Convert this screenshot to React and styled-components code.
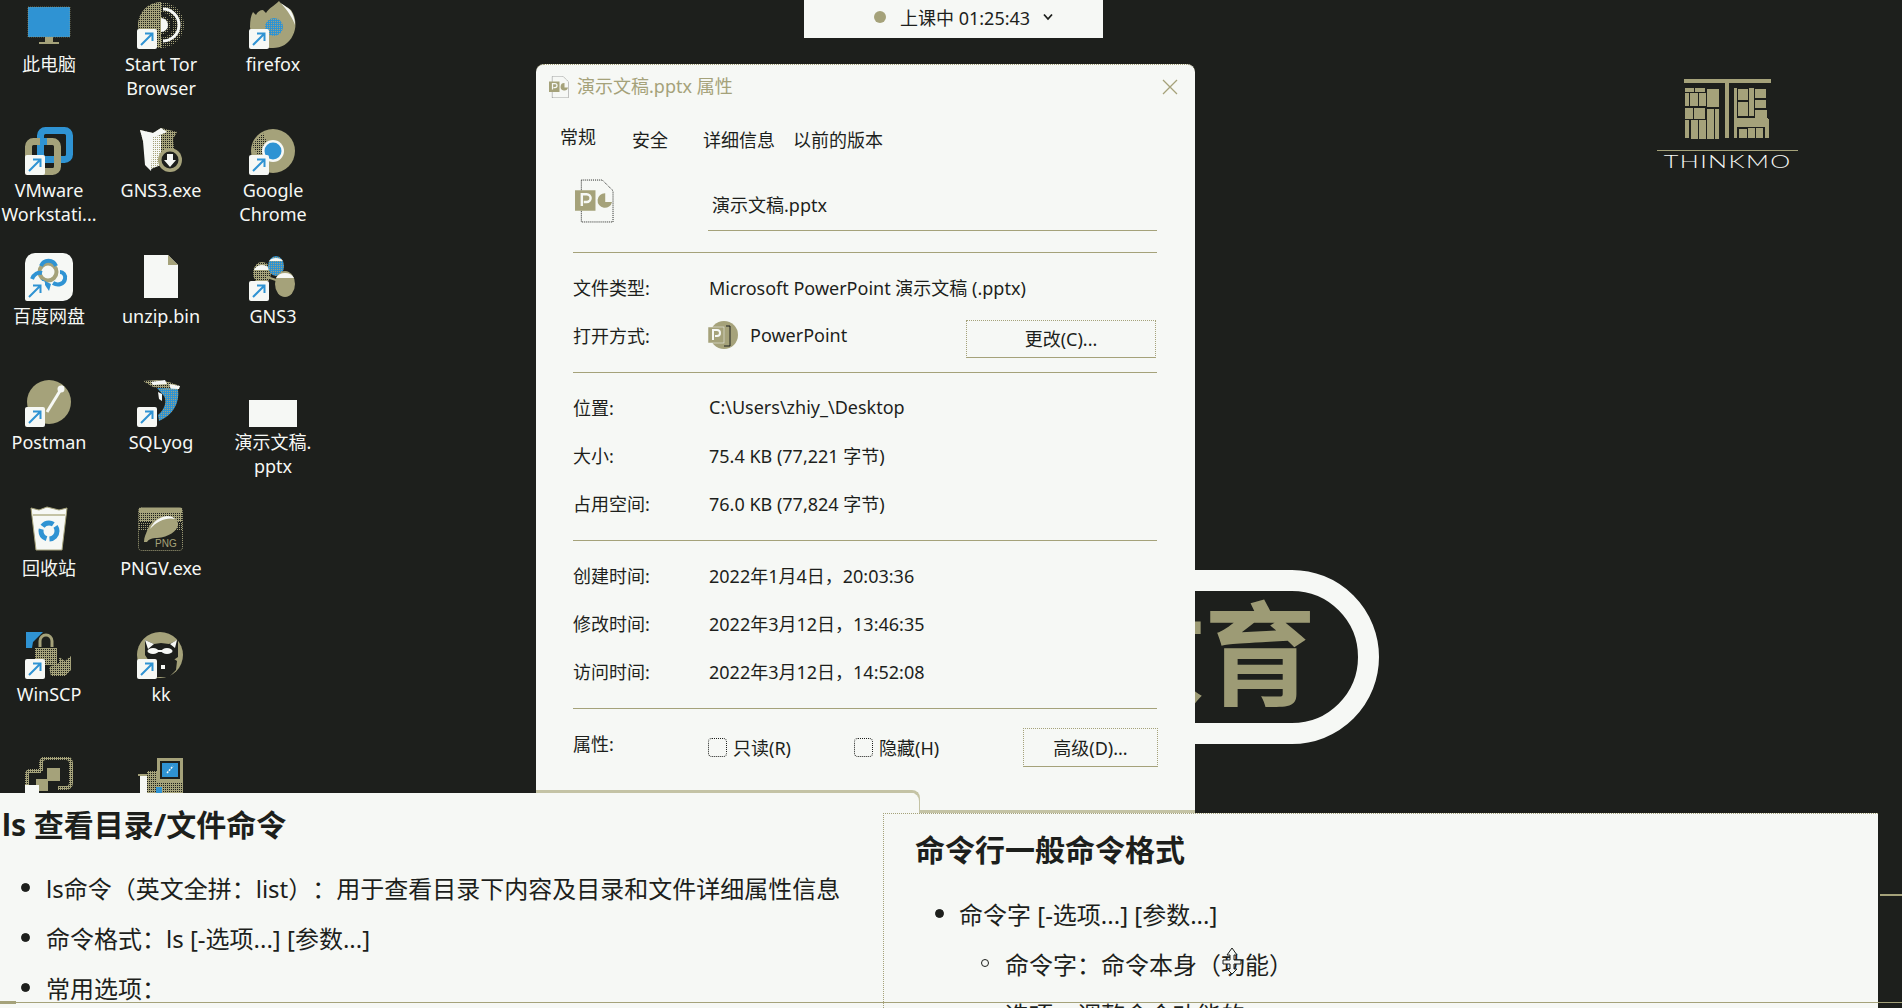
import React from 'react'
import styled, { createGlobalStyle } from 'styled-components'

const DARK = '#1d1f1c'
const PAPER = '#f6f8f5'
const OLIVE = '#a5a27a'
const HAZE = '#c4c3a5'
const BLUE = '#2f93d3'
const FONT = '"Noto Sans", "Noto Sans CJK SC", sans-serif'

const Global = createGlobalStyle`
  html, body { margin: 0; padding: 0; background: ${DARK}; }
  * { box-sizing: border-box; }
  body { text-spacing-trim: space-all; }
`

const Screen = styled.div`
  position: relative;
  width: 1902px;
  height: 1008px;
  overflow: hidden;
  background: ${DARK};
  font-family: ${FONT};
`

/* desktop icons */
const Desktop = styled.div`
  display: grid;
  grid-template-rows: repeat(7, 126px);
  grid-auto-columns: 98px;
  grid-auto-flow: column;
  column-gap: 14px;
`
const Cell = styled.div`
  display: flex;
  flex-direction: column;
  align-items: center;
  padding-top: 1px;
`
const IconBox = styled.div`
  position: relative;
  width: 48px;
  height: 48px;
  svg { display: block; }
`
const CellLabel = styled.div`
  margin-top: 3px;
  width: 100%;
  text-align: center;
  font-size: 18px;
  line-height: 24px;
  color: ${PAPER};
  white-space: pre-line;
`
const Badge = styled.div`
  position: absolute;
  left: 0;
  bottom: 0;
  width: 20px;
  height: 20px;
  border-radius: 2px;
  background: ${PAPER};
`

const Shortcut = () => (
  <Badge>
    <svg width="20" height="20" viewBox="0 0 20 20" fill="none" stroke={BLUE} strokeWidth="2">
      <path d="M4 16 15 5M8 4.500h7.500V12" />
    </svg>
  </Badge>
)

const Pic = ({ children }) => <svg width="48" height="48" viewBox="0 0 48 48">{children}</svg>

const HiddenSvg = styled.svg`
  position: absolute;
`
const Dither = () => (
  <HiddenSvg width="0" height="0">
    <defs>
      <pattern id="dither" width="2" height="2" patternUnits="userSpaceOnUse">
        <rect width="2" height="2" fill={OLIVE} />
        <rect width="1" height="1" fill={DARK} />
      </pattern>
      <pattern id="ditherdark" width="2" height="2" patternUnits="userSpaceOnUse">
        <rect width="2" height="2" fill={DARK} />
        <rect width="1" height="1" fill={OLIVE} />
      </pattern>
      <pattern id="ditherwhite" width="2" height="2" patternUnits="userSpaceOnUse">
        <rect width="2" height="2" fill={PAPER} />
        <rect width="1" height="1" fill={OLIVE} />
      </pattern>
      <pattern id="ditherblue" width="2" height="2" patternUnits="userSpaceOnUse">
        <rect width="2" height="2" fill={BLUE} />
        <rect width="1" height="1" fill={OLIVE} />
      </pattern>
    </defs>
  </HiddenSvg>
)

const icons = {
  pc: (
    <Pic>
      <rect x="3" y="6" width="42" height="30" fill={BLUE} stroke={OLIVE} strokeWidth="0.6" strokeDasharray="1 1" />
      <path d="M20 36h8v5h-8z" fill={OLIVE} />
      <path d="M14 41h20v2H14z" fill={OLIVE} />
    </Pic>
  ),
  tor: (
    <Pic>
      <path d="M24 1a23 23 0 0 0 0 46z" fill="url(#dither)" />
      <path d="M24 1a23 23 0 0 1 0 46z" fill="url(#ditherdark)" />
      <path d="M26 8a16 16 0 0 1 0 32" fill="none" stroke={PAPER} strokeWidth="3" />
      <path d="M24 13a11 11 0 0 1 0 22" fill="none" stroke={DARK} strokeWidth="3" />
      <path d="M24 17a7 7 0 0 1 0 14z" fill={PAPER} />
    </Pic>
  ),
  firefox: (
    <Pic>
      <path d="M30 0c2 4 8 5 12 9 5 7 6 17 2 25-4 9-12 13-20 13C12 47 2 38 1 26c0-7 1-12 3-15l3 3c1-3 4-5 7-5l3 3c3-5 8-7 13-12z" fill={OLIVE} />
      <path d="M30 0c3 4 9 6 12 10 3 5 4 10 4 14-2-6-6-13-16-24z" fill={PAPER} />
      <circle cx="25" cy="26" r="9" fill="url(#ditherblue)" />
    </Pic>
  ),
  vmware: (
    <Pic>
      <rect x="15.500" y="3.500" width="29" height="29" rx="5" fill="none" stroke={BLUE} strokeWidth="7" />
      <rect x="3.500" y="14.500" width="29" height="30" rx="5" fill="none" stroke={OLIVE} strokeWidth="7" />
      <path d="M15 11h7v7h-7z" fill={BLUE} />
    </Pic>
  ),
  gns3exe: (
    <Pic>
      <path d="M3 3 16 6 24 1 40 5 36 12 38 30 12 37 6 14z" fill="url(#dither)" />
      <path d="M3 3 16 6 24 1 30 5 18 10 14 44 8 38 6 14z" fill={PAPER} />
      <path d="M16 10 24 8 24 38 14 42z" fill="url(#ditherwhite)" />
      <circle cx="33" cy="33" r="12" fill={OLIVE} />
      <circle cx="33" cy="33" r="8.500" fill={DARK} />
      <path d="M30 27h6v6h3l-6 7-6-7h3z" fill={PAPER} />
    </Pic>
  ),
  chrome: (
    <Pic>
      <circle cx="24" cy="24" r="22" fill={OLIVE} />
      <path d="M3 18 14 6l6 14-10 10z" fill="url(#dither)" />
      <circle cx="24" cy="24" r="11" fill={PAPER} />
      <circle cx="24" cy="24" r="8.500" fill={BLUE} />
    </Pic>
  ),
  baidu: (
    <Pic>
      <rect width="48" height="48" rx="10" fill={PAPER} />
      <circle cx="23" cy="19" r="8.500" fill="none" stroke={OLIVE} strokeWidth="4" />
      <path d="M16 13a8 8 0 0 1 15 0" fill="none" stroke={BLUE} strokeWidth="4" />
      <path d="M7 26c2-5 6-7 10-6M28 30c5 3 11 1 12-4 1-4-2-7-5-7" fill="none" stroke={BLUE} strokeWidth="4" />
      <path d="M16 26 26 31 24 38z" fill={BLUE} />
    </Pic>
  ),
  file: (
    <Pic>
      <path d="M7 2h24l10 10v33H7z" fill={PAPER} />
      <path d="M31 2v10h10z" fill={OLIVE} />
    </Pic>
  ),
  gns3: (
    <Pic>
      <ellipse cx="13" cy="20" rx="9" ry="11" fill="url(#dither)" />
      <path d="M5 17a9 9 0 0 1 16 0z" fill={PAPER} />
      <ellipse cx="27" cy="13" rx="8" ry="10" fill="url(#ditherblue)" />
      <path d="M20 8a8 6 0 0 1 14 0z" fill={PAPER} />
      <path d="M18 24 30 28" stroke={OLIVE} strokeWidth="2" />
      <ellipse cx="36" cy="31" rx="10" ry="13" fill={OLIVE} />
      <path d="M27 25a10 9 0 0 1 18 0z" fill={PAPER} />
    </Pic>
  ),
  postman: (
    <Pic>
      <circle cx="24" cy="23" r="22" fill={OLIVE} />
      <path d="M38 7 22 33" stroke={PAPER} strokeWidth="3" />
      <circle cx="36" cy="10" r="3.500" fill={PAPER} />
    </Pic>
  ),
  sqlyog: (
    <Pic>
      <path d="M6 2 20 1 32 3 43 7 42 9 30 10 16 8z" fill="url(#dither)" />
      <path d="M14 3 28 1 30 5 16 6zM32 5 43 7 42 10 34 10z" fill={PAPER} />
      <path d="M20 9 41 10C43 24 36 36 22 42L21 36C28 30 30 22 27 17z" fill="url(#ditherblue)" />
      <path d="M21 13 25 15 25 22 22 20z" fill={PAPER} />
    </Pic>
  ),
  pptxBlank: (
    <Pic>
      <rect y="21" width="48" height="27" fill={PAPER} />
    </Pic>
  ),
  recycle: (
    <Pic>
      <path d="M6 3 14 5 22 2 34 5 42 3 37 45H11z" fill={PAPER} stroke={OLIVE} strokeWidth="1" />
      <path d="M8 10h32" stroke={HAZE} strokeWidth="2" />
      <circle cx="24" cy="26" r="8" fill="none" stroke={BLUE} strokeWidth="5" strokeDasharray="12 3" />
    </Pic>
  ),
  pngv: (
    <Pic>
      <rect x="1.500" y="2.500" width="44" height="43" rx="3" fill={DARK} stroke={OLIVE} strokeDasharray="1 1" />
      <rect x="2" y="3" width="43" height="5" fill={OLIVE} />
      <rect x="2" y="8" width="43" height="9" fill="url(#dither)" />
      <rect x="2" y="17" width="43" height="9" fill="url(#ditherdark)" />
      <path d="M7 37c0-5 2-8 3-11 3-9 11-15 20-15 6 0 12 4 11 9-1 6-9 12-21 13-5 0-8 1-10 4z" fill={OLIVE} />
      <path d="M13 24c3-7 9-12 17-13 4 0 6 1 8 3-8-2-18 2-25 10z" fill={PAPER} />
      <text x="18" y="42" fontSize="10" fontFamily="Liberation Sans" fill={OLIVE}>PNG</text>
    </Pic>
  ),
  winscp: (
    <Pic>
      <path d="M1 1h17L8 11l-1 6H1z" fill={BLUE} />
      <path d="M15 16V10a6 6 0 0 1 12 0v6" fill="none" stroke={OLIVE} strokeWidth="3" />
      <rect x="10" y="17" width="22" height="17" fill="url(#dither)" />
      <path d="M24 36 34 32V26l6 4 6-5v14l-6 6H26z" fill="url(#dither)" />
    </Pic>
  ),
  kk: (
    <Pic>
      <circle cx="23" cy="24" r="23" fill={OLIVE} />
      <path d="M8 9 17 13 24 12 32 13 41 9 41 26 35 30 12 30 8 24z" fill={DARK} />
      <path d="M8 9 17 13 11 18zM40 9 33 13 38 17z" fill={PAPER} />
      <ellipse cx="16" cy="20" rx="5.500" ry="3" fill={PAPER} />
      <ellipse cx="30" cy="20" rx="5.500" ry="3" fill={PAPER} />
      <path d="M20 19h6v2h-6z" fill={PAPER} />
      <path d="M16 27c5 3 12 3 18-1l6 4-1 9-7 7H20z" fill={DARK} />
      <path d="M24 34h4v4h-4z" fill={PAPER} />
    </Pic>
  ),
  sphere: (
    <Pic>
      <path d="M16 14V6a5 5 0 0 1 5-5h20a5 5 0 0 1 5 5v20a5 5 0 0 1-5 5h-8" fill="none" stroke="url(#dither)" strokeWidth="4" />
      <path d="M16 14H5a3 3 0 0 0-3 3v20" fill="none" stroke="url(#dither)" strokeWidth="4" />
      <rect x="22" y="11" width="13" height="13" fill={OLIVE} />
      <rect x="11" y="22" width="12" height="12" fill={OLIVE} />
      <rect y="28" width="14" height="20" fill={PAPER} />
    </Pic>
  ),
  network: (
    <Pic>
      <rect x="20" y="1" width="26" height="25" fill={OLIVE} />
      <rect x="23" y="4" width="20" height="18" fill={DARK} />
      <rect x="25" y="6" width="16" height="14" fill={BLUE} />
      <path d="M30 16 36 9" stroke={PAPER} strokeWidth="1.500" strokeDasharray="2 1" />
      <rect x="14" y="26" width="32" height="10" fill="url(#dither)" />
      <rect x="3" y="19" width="7" height="20" fill={PAPER} />
      <path d="M1 17h9v2H1z" fill={OLIVE} />
      <rect x="10" y="14" width="10" height="28" fill="url(#dither)" />
      <path d="M19 30h6v6h-6z" fill={BLUE} />
    </Pic>
  ),
}

const desktopItems = [
  { icon: 'pc', label: '此电脑' },
  { icon: 'vmware', label: 'VMware\nWorkstati...', link: true },
  { icon: 'baidu', label: '百度网盘', link: true },
  { icon: 'postman', label: 'Postman', link: true },
  { icon: 'recycle', label: '回收站' },
  { icon: 'winscp', label: 'WinSCP', link: true },
  { icon: 'sphere', label: '' },
  { icon: 'tor', label: 'Start Tor\nBrowser', link: true },
  { icon: 'gns3exe', label: 'GNS3.exe' },
  { icon: 'file', label: 'unzip.bin' },
  { icon: 'sqlyog', label: 'SQLyog', link: true },
  { icon: 'pngv', label: 'PNGV.exe' },
  { icon: 'kk', label: 'kk', link: true },
  { icon: 'network', label: '' },
  { icon: 'firefox', label: 'firefox', link: true },
  { icon: 'chrome', label: 'Google\nChrome', link: true },
  { icon: 'gns3', label: 'GNS3', link: true },
  { icon: 'pptxBlank', label: '演示文稿.\npptx' },
]

/* class timer bar */
const TimerBar = styled.div`
  position: absolute;
  left: 804px;
  top: 0;
  width: 299px;
  height: 38px;
  display: flex;
  align-items: center;
  padding-left: 70px;
  padding-bottom: 5px;
  background: ${PAPER};
  color: ${DARK};
  font-size: 18px;
`
const TimerDot = styled.span`
  width: 12px;
  height: 12px;
  border-radius: 50%;
  background: ${OLIVE};
  margin-right: 14px;
`
const TimerChevron = styled.svg`
  margin-left: 13px;
`

/* logo top right */
const Logo = styled.div`
  position: absolute;
  left: 1657px;
  top: 79px;
  width: 141px;
  display: flex;
  flex-direction: column;
  align-items: center;
`
const LogoWord = styled.div`
  width: 100%;
  margin-top: 11px;
  padding-top: 2px;
  border-top: 1px solid ${OLIVE};
  text-align: center;
  font-family: "Lato", sans-serif;
  font-weight: 300;
  font-size: 18px;
  line-height: 17px;
  color: ${PAPER};
  white-space: nowrap;
`
const LogoLetters = styled.span`
  display: inline-block;
  letter-spacing: 1px;
  transform: scaleX(1.4);
`

/* big wordmark behind the dialog */
const Wordmark = styled.div`
  position: absolute;
  left: 600px;
  top: 570px;
  width: 779px;
  height: 174px;
  display: flex;
  align-items: center;
  justify-content: flex-end;
  padding-right: 42px;
  padding-bottom: 18px;
  border: 21px solid ${PAPER};
  border-radius: 87px;
  font-family: "Noto Sans CJK SC", sans-serif;
  font-weight: 700;
  font-size: 112px;
  line-height: 1;
  color: #9d9b75;
`

/* properties dialog */
const Dialog = styled.div`
  position: absolute;
  left: 536px;
  top: 64px;
  width: 659px;
  height: 749px;
  display: flex;
  flex-direction: column;
  background: ${PAPER};
  border-top: 1px dotted ${OLIVE};
  border-radius: 8px 8px 0 0;
  color: ${DARK};
  font-size: 18px;
`
const TitleBar = styled.div`
  flex: none;
  height: 43px;
  display: flex;
  align-items: center;
  padding: 0 17px 0 13px;
`
const TitleText = styled.span`
  margin: 0 0 4px 8px;
  color: ${OLIVE};
  font-size: 18px;
`
const CloseBtn = styled.svg`
  margin-left: auto;
`
const Tabs = styled.div`
  flex: none;
  height: 57px;
  display: flex;
  align-items: flex-start;
  padding: 21px 0 0 24px;
`
const Tab = styled.div`
  width: ${p => p.$w}px;
  line-height: 22px;
  margin-top: ${p => (p.$active ? -3 : 0)}px;
  white-space: nowrap;
`
const Head = styled.div`
  flex: none;
  height: 88px;
  margin: 0 38px 0 37px;
  display: flex;
  align-items: flex-start;
  padding: 14px 0 0 2px;
  border-bottom: 1px solid ${OLIVE};
`
const NameBox = styled.div`
  width: 449px;
  height: 41px;
  margin: 11px 0 0 94px;
  padding-left: 4px;
  line-height: 30px;
  border-bottom: 1px solid ${OLIVE};
  flex: none;
`
const Section = styled.div`
  flex: none;
  margin: 0 38px 0 37px;
  padding: 11px 0 12px;
  border-bottom: 1px solid ${OLIVE};
`
const Row = styled.div`
  height: 48px;
  display: flex;
  align-items: center;
  padding-bottom: 2px;
  white-space: nowrap;
`
const Label = styled.div`
  flex: none;
  width: 136px;
`
const AppName = styled.span`
  margin-left: 12px;
`
const AppIcon = styled.svg`
  margin-left: -1px;
`
const PushButton = styled.div`
  width: ${p => p.$w}px;
  height: ${p => p.$h}px;
  margin-top: ${p => p.$top || 0}px;
  margin-left: auto;
  margin-right: ${p => p.$out || 0}px;
  padding-bottom: 2px;
  display: flex;
  align-items: center;
  justify-content: center;
  border: 1px dotted ${OLIVE};
  border-bottom: 1px solid ${OLIVE};
`
const AttrRow = styled.div`
  margin: 0 38px 0 37px;
  padding-top: 19px;
  display: flex;
  align-items: flex-start;
  white-space: nowrap;
`
const AttrLabel = styled(Label)`
  width: 135px;
  line-height: 32px;
`
const Check = styled.div`
  width: 146px;
  height: 39px;
  display: flex;
  align-items: center;
  gap: 6px;
`
const CheckBox = styled.span`
  width: 19px;
  height: 19px;
  border: 1px dotted ${DARK};
  border-radius: 4px;
`
const CheckText = styled.span`
  margin-bottom: 2px;
`
const SlideEdge = styled.div`
  position: absolute;
  left: 0;
  top: 725px;
  width: 384px;
  height: 24px;
  border-top: 3px solid ${HAZE};
  border-right: 3px solid ${HAZE};
  border-top-right-radius: 8px;
`
const SlideEdgeBottom = styled.div`
  position: absolute;
  left: 383px;
  right: 0;
  bottom: 0;
  height: 3px;
  background: ${HAZE};
`

/* the two slides in front */
const SlideLeft = styled.div`
  position: absolute;
  left: 0;
  top: 793px;
  width: 919px;
  height: 215px;
  padding: 14px 0 0 2px;
  background: ${PAPER};
  color: ${DARK};
  border-top-right-radius: 8px;
`
const SlideRight = styled.div`
  position: absolute;
  left: 883px;
  top: 813px;
  width: 995px;
  height: 195px;
  padding: 18px 0 0 31px;
  background: ${PAPER};
  color: ${DARK};
  border-left: 1px dotted ${OLIVE};
  border-top: 1px dotted ${OLIVE};
`
const SlideTitle = styled.h2`
  margin: 0 0 ${p => p.$after}px;
  font-size: 30px;
  font-weight: 700;
  line-height: 36px;
`
const Items = styled.ul`
  margin: 0;
  padding: 0;
  list-style: none;
`
const Item = styled.li`
  height: 50px;
  display: flex;
  align-items: center;
  font-size: 24px;
  color: ${DARK};
  white-space: nowrap;
`
const Marker = styled.span`
  flex: none;
  width: ${p => (p.$ring ? 8 : 9)}px;
  height: ${p => (p.$ring ? 8 : 9)}px;
  margin: 0 ${p => p.$gap}px 0 ${p => p.$indent}px;
  border-radius: 50%;
  background: ${p => (p.$ring ? 'transparent' : DARK)};
  border: 1px solid ${DARK};
`
const MoveCursor = styled.svg`
  position: absolute;
  left: 338px;
  top: 133px;
`
const RuleLine = styled.div`
  position: absolute;
  left: 0;
  right: 0;
  top: 1002px;
  height: 1px;
  background: ${OLIVE};
`
const RuleStub = styled.div`
  position: absolute;
  left: 0;
  top: 1001px;
  width: 16px;
  height: 3px;
  background: ${OLIVE};
`
const SideTick = styled.div`
  position: absolute;
  left: 1880px;
  right: 0;
  top: 894px;
  height: 2px;
  background: ${OLIVE};
`

const PptIcon = ({ w, h }) => (
  <svg width={w} height={h} viewBox="0 0 40 44">
    <path d="M6.500.500H28l11 11v32H6.500z" fill={PAPER} stroke={DARK} strokeWidth="1" strokeDasharray="1 1" />
    <rect y="11" width="21" height="21" fill={OLIVE} />
    <path d="M7 27V15h5a3.500 3.500 0 0 1 0 8H9" fill="none" stroke={PAPER} strokeWidth="2.500" />
    <path d="M31 14a7.500 7.500 0 1 0 7 9h-7z" fill={OLIVE} />
  </svg>
)

const LogoMark = () => (
  <svg width="87" height="60" viewBox="0 0 87 60" fill={OLIVE}>
    <path d="M0 0h87v4H0z" />
    <path d="M41 4h4v55h-4z" />
    <path d="M1 9h9v4H1zM11 9h10v4H11zM1 14h4v13H1zM6 14h8v13H6zM15 14h7v13h-7zM23 10h12v18H23z" />
    <path d="M1 29h8v11H1zM10 29h11v11H10zM1 41h4v18H1zM7 41h7v19H7zM15 41h7v19h-7zM23 30h7v30h-7zM31 30h4v30h-4z" />
    <path d="M50 9h3v50h-3zM54 10h10v11H54zM54 23h10v14H54zM65 9h5v28h-5zM71 10h11v9H71zM71 21h11v8H71zM71 31h12v8H71z" />
    <path d="M52 39h32v9H52zM55 50h8v9h-8zM64 49h7v10h-7zM72 49h7v10h-7zM81 40h4v19h-4z" />
  </svg>
)

export default function App() {
  return (
    <Screen>
      <Global />
      <Dither />

      <Desktop>
        {desktopItems.map((it, i) => (
          <Cell key={i}>
            <IconBox>
              {icons[it.icon]}
              {it.link && <Shortcut />}
            </IconBox>
            <CellLabel>{it.label}</CellLabel>
          </Cell>
        ))}
      </Desktop>

      <Logo>
        <LogoMark />
        <LogoWord><LogoLetters>THINKMO</LogoLetters></LogoWord>
      </Logo>

      <Wordmark>教育</Wordmark>

      <Dialog>
        <TitleBar>
          <PptIcon w={20} h={22} />
          <TitleText>演示文稿.pptx 属性</TitleText>
          <CloseBtn width="16" height="16" viewBox="0 0 16 16" stroke={OLIVE} strokeWidth="1.300" fill="none">
            <path d="M1 1l14 14M15 1 1 15" />
          </CloseBtn>
        </TitleBar>
        <Tabs>
          <Tab $w={72} $active>常规</Tab>
          <Tab $w={71}>安全</Tab>
          <Tab $w={90}>详细信息</Tab>
          <Tab>以前的版本</Tab>
        </Tabs>
        <Head>
          <PptIcon w={40} h={44} />
          <NameBox>演示文稿.pptx</NameBox>
        </Head>
        <Section>
          <Row>
            <Label>文件类型:</Label>
            Microsoft PowerPoint 演示文稿 (.pptx)
          </Row>
          <Row>
            <Label>打开方式:</Label>
            <AppIcon width="30" height="30" viewBox="0 0 30 30">
              <circle cx="16" cy="15" r="14" fill={OLIVE} />
              <rect y="7" width="16" height="16" fill={OLIVE} stroke={PAPER} strokeWidth="0.500" />
              <path d="M5 20V10h4a3 3 0 0 1 0 6H7" fill="none" stroke={PAPER} strokeWidth="2" />
              <path d="M18 6h4v20h-6" fill="none" stroke={DARK} strokeWidth="1" />
            </AppIcon>
            <AppName>PowerPoint</AppName>
            <PushButton $w={190} $h={38} $top={8} $out={1}>更改(C)...</PushButton>
          </Row>
        </Section>
        <Section>
          <Row><Label>位置:</Label>C:\Users\zhiy_\Desktop</Row>
          <Row><Label>大小:</Label>75.4 KB (77,221 字节)</Row>
          <Row><Label>占用空间:</Label>76.0 KB (77,824 字节)</Row>
        </Section>
        <Section>
          <Row><Label>创建时间:</Label>2022年1月4日，20:03:36</Row>
          <Row><Label>修改时间:</Label>2022年3月12日，13:46:35</Row>
          <Row><Label>访问时间:</Label>2022年3月12日，14:52:08</Row>
        </Section>
        <AttrRow>
          <AttrLabel>属性:</AttrLabel>
          <Check><CheckBox /><CheckText>只读(R)</CheckText></Check>
          <Check><CheckBox /><CheckText>隐藏(H)</CheckText></Check>
          <PushButton $w={135} $h={39} $out={-1}>高级(D)...</PushButton>
        </AttrRow>
        <SlideEdge />
        <SlideEdgeBottom />
      </Dialog>

      <TimerBar>
        <TimerDot />
        上课中 01:25:43
        <TimerChevron width="10" height="8" viewBox="0 0 10 8" fill="none" stroke={DARK} strokeWidth="1.800">
          <path d="M1 1.500 5 6 9 1.500" />
        </TimerChevron>
      </TimerBar>

      <SideTick />

      <SlideLeft>
        <SlideTitle $after={19}>ls 查看目录/文件命令</SlideTitle>
        <Items>
          <Item><Marker $indent={19} $gap={16} />ls命令（英文全拼：list）：用于查看目录下内容及目录和文件详细属性信息</Item>
          <Item><Marker $indent={19} $gap={16} />命令格式：ls [-选项...] [参数...]</Item>
          <Item><Marker $indent={19} $gap={16} />常用选项：</Item>
        </Items>
      </SlideLeft>

      <SlideRight>
        <SlideTitle $after={20}>命令行一般命令格式</SlideTitle>
        <Items>
          <Item><Marker $indent={20} $gap={15} />命令字 [-选项...] [参数...]</Item>
          <Item><Marker $indent={66} $gap={16} $ring />命令字：命令本身（功能）</Item>
          <Item><Marker $indent={66} $gap={16} $ring />选项：调整命令功能的</Item>
        </Items>
        <MoveCursor width="20" height="28" viewBox="0 0 20 28" fill={PAPER} stroke={DARK} strokeWidth="1">
          <path d="M10 1 15 8h-3v5h7v4h-7v5h3l-5 5-5-5h3v-5H1v-4h7V8H5z" />
        </MoveCursor>
      </SlideRight>

      <RuleLine />
      <RuleStub />
    </Screen>
  )
}
